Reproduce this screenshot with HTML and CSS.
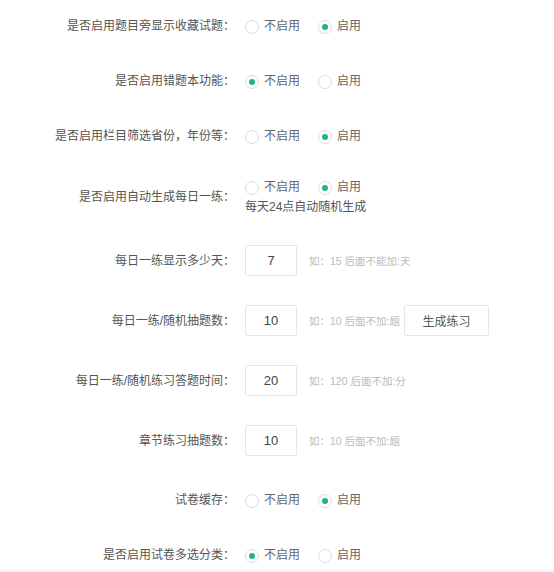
FILE: index.html
```html
<!DOCTYPE html>
<html lang="zh-CN">
<head>
  <meta charset="UTF-8">
  <title>练习设置</title>
  <link rel="stylesheet" href="styles.css">
</head>
<body>

  <form class="setting-form">
    <div class="row">
      <label class="row-label">是否启用题目旁显示收藏试题：</label>
      <div class="radios">
        <span class="radio"><i class="dot"></i>不启用</span>
        <span class="radio"><i class="dot on"></i>启用</span>
      </div>
    </div>

    <div class="row">
      <label class="row-label">是否启用错题本功能：</label>
      <div class="radios">
        <span class="radio"><i class="dot on"></i>不启用</span>
        <span class="radio"><i class="dot"></i>启用</span>
      </div>
    </div>

    <div class="row">
      <label class="row-label">是否启用栏目筛选省份，年份等：</label>
      <div class="radios">
        <span class="radio"><i class="dot"></i>不启用</span>
        <span class="radio"><i class="dot on"></i>启用</span>
      </div>
    </div>

    <div class="row row-note">
      <label class="row-label">是否启用自动生成每日一练：</label>
      <div>
        <div class="radios">
          <span class="radio"><i class="dot"></i>不启用</span>
          <span class="radio"><i class="dot on"></i>启用</span>
        </div>
        <p class="note">每天24点自动随机生成</p>
      </div>
    </div>

    <div class="row row-input">
      <label class="row-label">每日一练显示多少天：</label>
      <div class="field">
        <input class="num" type="text" value="7">
        <span class="hint">如：15 后面不能加:天</span>
      </div>
    </div>

    <div class="row row-input">
      <label class="row-label">每日一练/随机抽题数：</label>
      <div class="field">
        <input class="num" type="text" value="10">
        <span class="hint">如：10 后面不加:题</span>
        <button type="button" class="btn">生成练习</button>
      </div>
    </div>

    <div class="row row-input">
      <label class="row-label">每日一练/随机练习答题时间：</label>
      <div class="field">
        <input class="num" type="text" value="20">
        <span class="hint">如：120 后面不加:分</span>
      </div>
    </div>

    <div class="row row-input">
      <label class="row-label">章节练习抽题数：</label>
      <div class="field">
        <input class="num" type="text" value="10">
        <span class="hint">如：10 后面不加:题</span>
      </div>
    </div>

    <div class="row after-input">
      <label class="row-label">试卷缓存：</label>
      <div class="radios">
        <span class="radio"><i class="dot"></i>不启用</span>
        <span class="radio"><i class="dot on"></i>启用</span>
      </div>
    </div>

    <div class="row">
      <label class="row-label">是否启用试卷多选分类：</label>
      <div class="radios">
        <span class="radio"><i class="dot on"></i>不启用</span>
        <span class="radio"><i class="dot"></i>启用</span>
      </div>
    </div>
  </form>

  <div class="footer-bar"></div>

</body>
</html>
```

FILE: styles.css
```css
body {
  margin: 0;
  background: #fff;
  font-family: "Liberation Sans", "Noto Sans CJK SC", sans-serif;
  font-size: 12px;
  color: #555;
}
.setting-form {
  padding-top: 16px;
}
.row {
  display: grid;
  grid-template-columns: 235px 1fr;
  column-gap: 10px;
  align-items: center;
  margin-bottom: 35px;
}
.row-label {
  text-align: right;
  color: #555;
  line-height: 20px;
}
.radios {
  display: flex;
  align-items: center;
  height: 20px;
}
.radio {
  display: inline-flex;
  align-items: center;
  margin-right: 18px;
  color: #666;
  line-height: 20px;
}
.dot {
  width: 12px;
  height: 12px;
  border: 1px solid #dcdcdc;
  border-radius: 50%;
  margin: 2px 5px 0 0;
  position: relative;
  box-sizing: content-box;
}
.dot.on::after {
  content: "";
  position: absolute;
  left: 3px;
  top: 3px;
  width: 6px;
  height: 6px;
  border-radius: 50%;
  background: #1ab394;
}

/* two-line row: radios with a note under them */
.row-note {
  margin-top: -4px;
  margin-bottom: 28px;
}
.note {
  margin: 0;
  line-height: 20px;
  color: #555;
}

.row-input {
  margin-bottom: 29px;
}
.field {
  display: flex;
  align-items: center;
}
.num {
  width: 52px;
  height: 31px;
  box-sizing: border-box;
  border: 1px solid #e6e6e6;
  border-radius: 2px;
  text-align: center;
  font-family: inherit;
  font-size: 13px;
  color: #444;
  padding: 0;
  outline: none;
}
.hint {
  margin-left: 12px;
  font-size: 10.5px;
  color: #bbb;
}
.btn {
  margin-left: 4px;
  width: 85px;
  height: 31px;
  background: #fff;
  border: 1px solid #e6e6e6;
  border-radius: 2px;
  font-family: inherit;
  font-size: 12px;
  color: #555;
  cursor: pointer;
}
.after-input {
  margin-top: 34px;
}
.footer-bar {
  margin-top: -31px;
  height: 4px;
  background: #f5f5f5;
}
```
